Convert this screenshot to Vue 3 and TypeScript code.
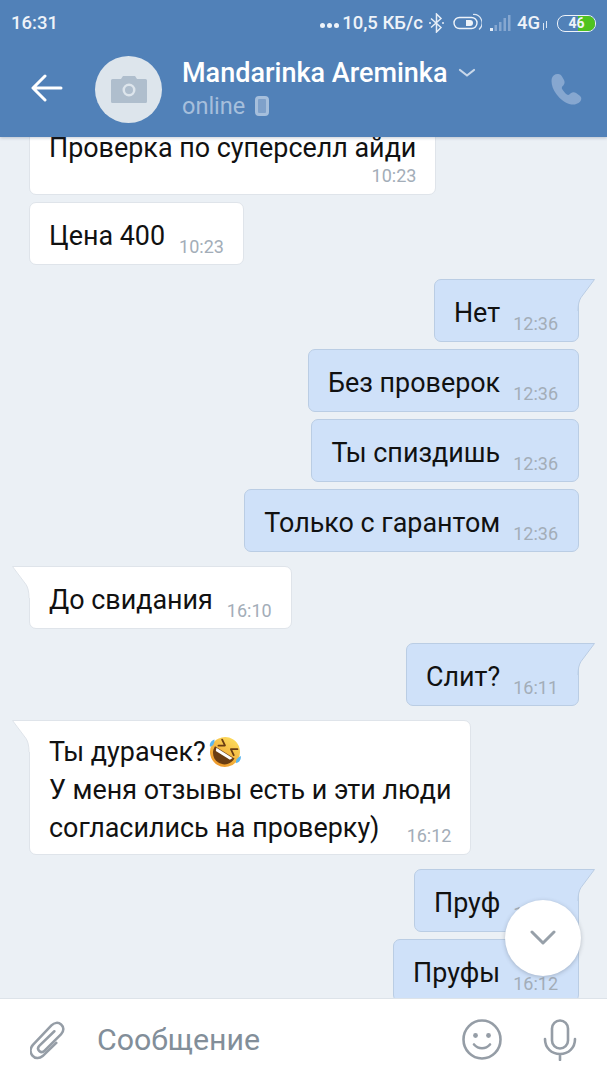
<script setup lang="ts">
interface Message {
  id: number
  out: boolean
  lines: string[]
  time: string
  tail?: boolean
  near?: boolean
  stacked?: boolean
  emoji?: boolean
}

const messages: Message[] = [
  { id: 1, out: false, lines: ['Проверка по суперселл айди'], time: '10:23', stacked: true },
  { id: 2, out: false, lines: ['Цена 400'], time: '10:23', near: true },
  { id: 3, out: true, lines: ['Нет'], time: '12:36', tail: true },
  { id: 4, out: true, lines: ['Без проверок'], time: '12:36', near: true },
  { id: 5, out: true, lines: ['Ты спиздишь'], time: '12:36', near: true },
  { id: 6, out: true, lines: ['Только с гарантом'], time: '12:36', near: true },
  { id: 7, out: false, lines: ['До свидания'], time: '16:10', tail: true },
  { id: 8, out: true, lines: ['Слит?'], time: '16:11', tail: true },
  {
    id: 9,
    out: false,
    lines: ['Ты дурачек?', 'У меня отзывы есть и эти люди', 'согласились на проверку)'],
    time: '16:12',
    tail: true,
    emoji: true
  },
  { id: 10, out: true, lines: ['Пруф'], time: '16:12', tail: true },
  { id: 11, out: true, lines: ['Пруфы'], time: '16:12', near: true }
]
</script>

<template>
  <div class="screen">
    <header class="top">
      <div class="status">
        <span class="clock">16:31</span>
        <div class="status-right">
          <span class="dots"><i></i><i></i><i></i></span>
          <span class="speed">10,5 КБ/с</span>
          <svg class="bt" width="17" height="20" viewBox="0 0 17 20" fill="none" stroke="#e6edf6" stroke-width="1.5">
            <path d="M3 5.500l10 9-4.500 4.500V1l4.500 4.500-10 9" />
            <circle cx="2" cy="10" r="1" fill="#e6edf6" stroke="none" />
            <circle cx="15" cy="10" r="1" fill="#e6edf6" stroke="none" />
          </svg>
          <svg class="toggle" width="29" height="20" viewBox="0 0 29 20" fill="none">
            <rect x="1" y="4.500" width="23" height="11" rx="5.500" stroke="#eef3f9" stroke-width="1.400" />
            <path d="M13 7h4a3 3 0 010 6h-4z" fill="#eef3f9" />
            <path d="M20 1.500a8.500 8.500 0 016 15" stroke="#dbe6f3" stroke-width="1.200" />
          </svg>
          <svg class="signal" width="21" height="18" viewBox="0 0 21 18">
            <rect x="0" y="14" width="3" height="3" fill="#e6edf6" />
            <rect x="4.500" y="11" width="2.500" height="6" fill="#86a7d0" />
            <rect x="9" y="8" width="2.500" height="9" fill="#86a7d0" />
            <rect x="13.500" y="4" width="2.500" height="13" fill="#86a7d0" />
            <rect x="18" y="1" width="2.500" height="16" fill="#86a7d0" />
          </svg>
          <span class="net">4G</span>
          <svg class="arrows" width="6" height="9" viewBox="0 0 6 9" stroke="#dbe6f3" stroke-width="1">
            <path d="M1.500 9V2M4.500 0v7" />
          </svg>
          <div class="battery">
            <div class="battery-fill"></div>
            <span class="battery-text">46</span>
          </div>
        </div>
      </div>

      <div class="bar">
        <svg class="back" width="32" height="28" viewBox="0 0 32 28" fill="none" stroke="#fff" stroke-width="3" stroke-linecap="round" stroke-linejoin="round">
          <path d="M30 14H3M14 2L2 14l12 12" />
        </svg>
        <div class="avatar">
          <svg width="36" height="27" viewBox="0 0 36 27">
            <path fill="#afbecd" fill-rule="evenodd" d="M1.500 3H10l2-3h12l2 3h8.500A1.500 1.500 0 0136 4.500v21a1.500 1.500 0 01-1.500 1.500h-33A1.500 1.500 0 010 25.500v-21A1.500 1.500 0 011.500 3zM18 7.500a6.500 6.500 0 100 13 6.500 6.500 0 000-13zM18 10a4 4 0 110 8 4 4 0 010-8z" />
          </svg>
        </div>
        <div class="who">
          <div class="name-row">
            <span class="name">Mandarinka Areminka</span>
            <svg width="18" height="10" viewBox="0 0 18 10" fill="none" stroke="#c9d8ea" stroke-width="2.200" stroke-linecap="round" stroke-linejoin="round">
              <path d="M2 2l7 5.500L16 2" />
            </svg>
          </div>
          <div class="online-row">
            <span class="online">online</span>
            <svg width="14" height="20" viewBox="0 0 14 20">
              <rect x="1.500" y="1.500" width="11" height="17" rx="2.500" fill="#7fa1ca" stroke="#a6bfdc" stroke-width="3" />
            </svg>
          </div>
        </div>
        <svg class="phone" width="31" height="32" viewBox="0 0 31 32">
          <path fill="#86a7d0" d="M8.200 1.200C5 .2 1.500 2.200.8 5.500c-.9 4.500.5 10 4.500 15.500 4.200 5.700 9.500 9.500 15 10.400 3 .5 6.500-.4 8.700-2.700 1.800-2 1.700-4.400-.2-5.900l-3.700-2.800c-1.700-1.300-3.900-1.100-5.400.3l-1.100 1c-.8.700-1.900.8-2.700.2-1.700-1.200-3.600-3.400-4.800-5.500-.5-.9-.3-2 .4-2.800l1-1c1.300-1.400 1.400-3.500.5-5.200L11 3.400c-.6-1.100-1.600-1.900-2.800-2.200z" />
        </svg>
      </div>
    </header>

    <main class="chat">
      <div class="list">
        <div
          v-for="m in messages"
          :key="m.id"
          class="msg"
          :class="{ out: m.out, tailed: m.tail, near: m.near, stacked: m.stacked, many: m.lines.length > 1 }"
        >
          <svg v-if="m.tail" class="tail" width="18" height="34" viewBox="0 0 18 34">
            <path class="tail-fill" d="M0 .5h17.500L4 18.500Q1 23 1 32H0z" />
            <path class="tail-line" d="M0 .5h17.500L4 18.500Q1 23 1 32" />
          </svg>
          <template v-if="m.lines.length > 1">
            <div class="line first">
              {{ m.lines[0] }}
              <svg v-if="m.emoji" class="emoji" width="34" height="34" viewBox="0 0 34 34">
                <defs>
                  <linearGradient id="face" x1="0" y1="0" x2="0" y2="1">
                    <stop offset="0" stop-color="#fcd95a" />
                    <stop offset="1" stop-color="#ee9a2c" />
                  </linearGradient>
                </defs>
                <g transform="rotate(32 17 17)">
                  <circle cx="17" cy="17" r="15" fill="url(#face)" />
                  <path d="M5.500 17.500h23c0 7-5 12-11.500 12S5.500 24.500 5.500 17.500z" fill="#6b3d12" />
                  <path d="M7.500 18h19l-1.200 3H8.700z" fill="#fff" />
                  <path d="M8 8l5.500 3.500L8 15M26 8l-5.500 3.500L26 15" fill="none" stroke="#6b3d12" stroke-width="1.800" stroke-linecap="round" stroke-linejoin="round" />
                  <path d="M1.500 12c-2.500 3-2 6.500 0 8.500 2-1.500 2.500-5 0-8.500zM32.500 12c2.500 3 2 6.500 0 8.500-2-1.500-2.500-5 0-8.500z" fill="#5cb6ef" />
                </g>
              </svg>
            </div>
            <div class="line">{{ m.lines[1] }}</div>
            <div class="line last">
              <span>{{ m.lines[2] }}</span>
              <span class="time">{{ m.time }}</span>
            </div>
          </template>
          <template v-else>
            <span class="text">{{ m.lines[0] }}</span>
            <span class="time">{{ m.time }}</span>
          </template>
        </div>
      </div>
    </main>

    <button class="fab" type="button" aria-label="Вниз">
      <svg width="26" height="16" viewBox="0 0 26 16" fill="none" stroke="#97a0a9" stroke-width="3" stroke-linecap="round" stroke-linejoin="round">
        <path d="M2 2l11 11L24 2" />
      </svg>
    </button>

    <footer class="composer">
      <svg class="clip" width="37" height="40" viewBox="0 0 38 40" fill="none" stroke="#959da6" stroke-width="2.600" stroke-linecap="round">
        <path d="M27 23L13 36.500c-3.500 3-8 2.500-10.500-.5S0 28.500 3 25L22 5c3-3 7-3.500 10-1s3 7 0 10L15 31c-1.700 1.700-4 1.700-5.500.3s-1.500-3.600 0-5.300L25 11" />
      </svg>
      <span class="placeholder">Сообщение</span>
      <svg class="smile" width="40" height="41" viewBox="0 0 40 41" fill="none" stroke="#959da6" stroke-width="2.600">
        <ellipse cx="20" cy="20.500" rx="18.500" ry="19" />
        <circle cx="13.500" cy="16.500" r="2.400" fill="#959da6" stroke="none" />
        <circle cx="26.500" cy="16.500" r="2.400" fill="#959da6" stroke="none" />
        <path d="M12 25.500c4.500 5 11.500 5 16 0" stroke-linecap="round" />
      </svg>
      <svg class="mic" width="34" height="42" viewBox="0 0 34 42" fill="none" stroke="#959da6" stroke-width="2.600" stroke-linecap="round">
        <rect x="9" y="1.500" width="16" height="28" rx="8" />
        <path d="M2 20c0 9 6.500 15 15 15s15-6 15-15M17 35v6" />
      </svg>
    </footer>
  </div>
</template>

<style scoped>
.screen {
  position: relative;
  width: 607px;
  height: 1080px;
  display: flex;
  flex-direction: column;
  overflow: hidden;
  background: #ebf0f5;
  font-family: Roboto, "Noto Sans", sans-serif;
}

.top {
  flex: none;
  height: 137px;
  background: #5181b8;
  box-shadow: 0 1px 3px rgba(40, 60, 90, 0.25);
  z-index: 2;
  color: #fff;
}

.status {
  height: 44px;
  padding: 2px 11px 0 11px;
  box-sizing: border-box;
  display: flex;
  align-items: center;
  justify-content: space-between;
}

.clock {
  font-size: 18.500px;
  font-weight: 500;
  color: #eef3f9;
}

.status-right {
  display: flex;
  align-items: center;
}

.dots {
  display: flex;
  gap: 2px;
  margin: 4px 3px 0 0;
}

.dots i {
  width: 5px;
  height: 5px;
  border-radius: 50%;
  background: #eef3f9;
}

.speed {
  font-size: 18.500px;
  font-weight: 500;
  color: #eef3f9;
  margin-right: 5px;
}

.bt {
  margin-right: 8px;
}

.toggle {
  margin-right: 8px;
}

.signal {
  margin-right: 6px;
}

.net {
  font-size: 18.500px;
  font-weight: 500;
  color: #eef3f9;
}

.arrows {
  margin: 4px 9px 0 2px;
}

.battery {
  position: relative;
  box-sizing: border-box;
  width: 39px;
  height: 17px;
  border: 1.500px solid #eef3f9;
  border-radius: 8px;
  display: flex;
  align-items: center;
  justify-content: center;
  overflow: hidden;
}

.battery-fill {
  position: absolute;
  left: 0;
  top: 0;
  bottom: 0;
  width: 100%;
  background: linear-gradient(90deg, transparent 0 55%, #4fc21f 55%);
}

.battery-text {
  position: relative;
  font-size: 14px;
  font-weight: 700;
  color: #eef3f9;
}

.bar {
  height: 93px;
  display: flex;
  align-items: flex-start;
  padding-top: 12px;
}

.back {
  margin: 18px 0 0 31px;
}

.avatar {
  width: 67px;
  height: 67px;
  margin-left: 32px;
  border-radius: 50%;
  background: #dde5ec;
  display: flex;
  align-items: center;
  justify-content: center;
}

.who {
  margin-left: 20px;
  flex: 1;
}

.name-row {
  display: flex;
  align-items: center;
  gap: 10px;
  height: 34px;
}

.name {
  font-size: 27px;
  font-weight: 500;
  color: #fff;
}

.online-row {
  display: flex;
  align-items: center;
  gap: 10px;
  margin-top: 2px;
}

.online {
  font-size: 23.500px;
  color: #a6bfdc;
}

.phone {
  margin: 17px 25px 0 0;
}

.chat {
  flex: 1;
  min-height: 0;
  overflow: hidden;
}

.list {
  display: flex;
  flex-direction: column;
  align-items: flex-start;
  padding: 0 28px 0 29px;
}

.msg {
  position: relative;
  display: flex;
  align-items: flex-end;
  box-sizing: border-box;
  min-height: 63px;
  margin-top: 14px;
  padding: 10px 19px 10px 19px;
  background: #fff;
  border: 1px solid #dfe4ea;
  border-radius: 7px;
  font-size: 26.900px;
  line-height: 36px;
  color: #111;
}

.msg.near {
  margin-top: 7px;
}

.msg.out {
  align-self: flex-end;
  padding-right: 20px;
  background: #cfe1f9;
  border-color: #bacde4;
}

.msg.tailed {
  border-top-left-radius: 0;
}

.msg.out.tailed {
  border-top-left-radius: 7px;
  border-top-right-radius: 0;
}

.msg.stacked {
  flex-direction: column;
  margin-top: -13px;
  padding-top: 5px;
  padding-bottom: 5px;
}

.msg.many {
  flex-direction: column;
  align-items: stretch;
  padding-top: 13px;
  padding-bottom: 7px;
}

.line {
  white-space: nowrap;
  height: 39px;
  display: flex;
  align-items: center;
}

.line.first {
  height: 36px;
}

.line.last {
  justify-content: space-between;
  height: 38px;
}

.line.last .time {
  margin: 16px 0 0 0;
}

.emoji {
  margin: 0 0 0 2px;
}

.text {
  white-space: nowrap;
}

.time {
  flex: none;
  margin: 0 0 -6px 14px;
  font-size: 18px;
  line-height: 26px;
  color: #a3adb8;
}

.msg.out .time {
  margin-left: 13px;
}

.msg.stacked .time {
  margin: -3px 0 0;
}

.tail {
  position: absolute;
  top: -1px;
  left: -18px;
  transform: scaleX(-1);
}

.msg.out .tail {
  left: auto;
  right: -17px;
  transform: none;
}

.tail-fill {
  fill: #fff;
}

.tail-line {
  fill: none;
  stroke: #dfe4ea;
}

.msg.out .tail-fill {
  fill: #cfe1f9;
}

.msg.out .tail-line {
  stroke: #bacde4;
}

.fab {
  position: absolute;
  left: 505px;
  top: 900px;
  width: 76px;
  height: 76px;
  padding: 0;
  border: 0;
  border-radius: 50%;
  background: #fff;
  box-shadow: 0 1px 4px rgba(60, 70, 85, 0.3);
  display: flex;
  align-items: center;
  justify-content: center;
  z-index: 3;
}

.composer {
  flex: none;
  box-sizing: border-box;
  height: 82px;
  display: flex;
  align-items: center;
  background: #fff;
  border-top: 1px solid #dde3e9;
  position: relative;
  z-index: 2;
  padding-left: 30px;
}

.placeholder {
  margin-left: 30px;
  font-size: 30.300px;
  color: #828e99;
  flex: 1;
}

.smile {
  margin-right: 41px;
}

.mic {
  margin-right: 30px;
}
</style>

<style>
html,
body {
  margin: 0;
  background: #ebf0f5;
}
</style>
